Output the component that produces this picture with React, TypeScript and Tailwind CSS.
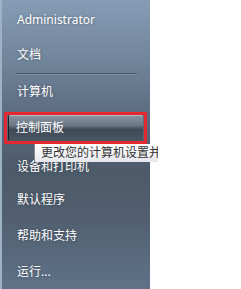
import React from 'react';

const font = { fontFamily: '"Noto Sans", "Noto Sans CJK SC", sans-serif' };

const Item: React.FC<{ label: string; className?: string }> = ({ label, className }) => (
    <div className={`h-4 pl-[15px] flex items-center text-[12px] leading-4 text-white [text-shadow:0_0_3px_rgba(0,0,0,0.35)] ${className ?? ''}`}>
        {label}
    </div>
);

const App: React.FC = () => {
    return (
        <div className="w-[241px] h-[289px] bg-white flex" style={font}>
            <div className="relative w-[150px] h-[289px] flex flex-col pt-[12px] border-l-2 border-[#9eb2c6] bg-[linear-gradient(180deg,#879db6_0%,#6f8399_22%,#56657a_45%,#4c5a69_60%,#515f70_75%,#5f7288_100%)]">
                <Item label="Administrator" className="pl-[13px]" />
                <Item label="文档" className="mt-[19px] pl-[13px]" />
                {/* separator */}
                <div className="mt-[10px] ml-[14px] mr-[13px] h-[2px] border-t border-[#4a596a] border-b border-b-[#7d8fa2]" />
                <Item label="计算机" className="mt-[9px] pl-[13px]" />

                {/* hovered item */}
                <div className="relative mt-[15px] ml-[6px] mr-[7px] h-[26px] pl-[7px] flex items-center text-[12px] text-white border-l border-[#1a1f24] rounded-[2px] bg-[linear-gradient(180deg,#8b97a3_0%,#6a7683_40%,#3e4a56_55%,#4a5662_100%)] shadow-[inset_0_1px_0_rgba(255,255,255,0.35)]">
                    控制面板
                    <div className="absolute -left-[5px] -top-[3px] -right-[4px] -bottom-[3px] border-[3px] border-[#e5272f] rounded-[1px]" />
                    <div className="absolute left-[25px] top-[29px] w-[124px] h-[18px] overflow-hidden whitespace-nowrap pl-[6px] flex items-center text-[12px] leading-4 text-[#333] bg-[linear-gradient(180deg,#ffffff_0%,#e6e7ee_100%)] border-l border-[#8a8a8a] z-10">
                        更改您的计算机设置并自定义其功能。
                    </div>
                </div>

                <Item label="设备和打印机" className="mt-[18px] pl-[13px]" />
                <Item label="默认程序" className="mt-[17px] pl-[13px]" />
                <Item label="帮助和支持" className="mt-[20px] pl-[13px]" />
                <Item label="运行..." className="mt-[20px] pl-[13px]" />
            </div>
        </div>
    );
};

export default App;
